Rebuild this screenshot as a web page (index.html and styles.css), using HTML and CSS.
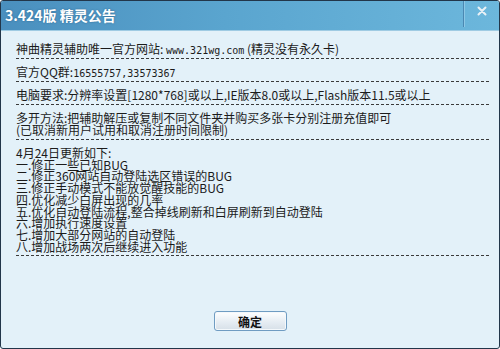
FILE: index.html
```html
<!DOCTYPE html>
<html lang="zh-CN">
<head>
  <meta charset="UTF-8" />
  <title>3.424版 精灵公告</title>
  <link rel="stylesheet" href="styles.css">
</head>
<body>

<div class="dialog">
  <div class="titlebar">
    <span class="title">3.424版 精灵公告</span>
    <div class="closeBtn">
      <svg width="10" height="10" viewBox="0 0 10 10">
        <path d="M1.5 1.5 L8.5 8.5 M8.5 1.5 L1.5 8.5" stroke="#e9f1f6" stroke-width="2" stroke-linecap="round"/>
      </svg>
    </div>
  </div>

  <div class="content">
    <div class="section first">神曲精灵辅助唯一官方网站: <span class="en">www.321wg.com</span> (精灵没有永久卡)</div>
    <div class="section">官方QQ群:<span class="en">16555757,33573367</span></div>
    <div class="section">电脑要求:分辨率设置[1280*768]或以上,IE版本8.0或以上,Flash版本11.5或以上</div>
    <div class="section">
      多开方法:把辅助解压或复制不同文件夹并购买多张卡分别注册充值即可<br>
      (已取消新用户试用和取消注册时间限制)
    </div>
    <div class="section updates">
      4月24日更新如下:<br>
      一.修正一些已知BUG<br>
      二.修正360网站自动登陆选区错误的BUG<br>
      三.修正手动模式不能放觉醒技能的BUG<br>
      四.优化减少白屏出现的几率<br>
      五.优化自动登陆流程,整合掉线刷新和白屏刷新到自动登陆<br>
      六.增加执行速度设置<br>
      七.增加大部分网站的自动登陆<br>
      八.增加战场两次后继续进入功能
    </div>

    <div class="footer">
      <button class="okBtn">确定</button>
    </div>
  </div>
</div>

</body>
</html>
```

FILE: styles.css
```css
:root {
  --frame: #22364a;
  --panel: #e3f1f9;
  --ink: #1b1b1b;
}

html, body {
  margin: 0;
  padding: 0;
  width: 500px;
  height: 349px;
  overflow: hidden;
  background: #ffffff;
  font-family: "Noto Sans CJK SC", "DejaVu Sans", sans-serif;
}

.dialog {
  box-sizing: border-box;
  width: 500px;
  height: 349px;
  border: 1px solid var(--frame);
  border-radius: 3px;
  display: flex;
  flex-direction: column;
  background: var(--panel);
  overflow: hidden;
}

.titlebar {
  height: 29px;
  flex: none;
  display: flex;
  align-items: center;
  background: linear-gradient(90deg, #4a8fbe 0%, #5aa5cf 45%, #6cb7dc 100%);
  border-bottom: 1px solid #9fcbe3;
}

.title {
  flex: 1;
  padding-left: 4px;
  margin-top: -1px;
  color: #ffffff;
  font-size: 14px;
  font-weight: bold;
  text-shadow: 0 0 2px #2c6690;
}

.closeBtn {
  width: 35px;
  height: 26px;
  align-self: flex-start;
  display: flex;
  align-items: center;
  justify-content: center;
  border-left: 1px solid #4b88b2;
  box-shadow: inset 1px 0 0 #8cc8e6;
}

.closeBtn svg {
  margin-top: -6px;
}

.content {
  flex: 1;
  display: flex;
  flex-direction: column;
  padding: 12px 10px 0 15px;
  color: var(--ink);
  font-size: 12px;
  line-height: 12px;
}

.en {
  font-family: "DejaVu Sans Mono", monospace;
  font-size: 10px;
  line-height: 8px;
}

.section {
  padding: 7px 0 3px;
  border-bottom: 1px dashed #3a3a3a;
  white-space: nowrap;
}

.section.first {
  padding-top: 0;
}

.updates {
  line-height: 11.7px;
}

.footer {
  flex: 1;
  display: flex;
  align-items: flex-end;
  justify-content: center;
  padding-bottom: 17px;
  margin-left: -5px;
}

.okBtn {
  width: 73px;
  height: 20px;
  padding: 0;
  border: 1px solid #6f9cc2;
  border-radius: 3px;
  background: linear-gradient(#ffffff, #e6edf3 55%, #d7e0e8);
  color: #111;
  font-family: inherit;
  font-size: 12px;
  font-weight: bold;
  box-shadow: inset 0 0 0 1px #f4f8fb;
}
```
